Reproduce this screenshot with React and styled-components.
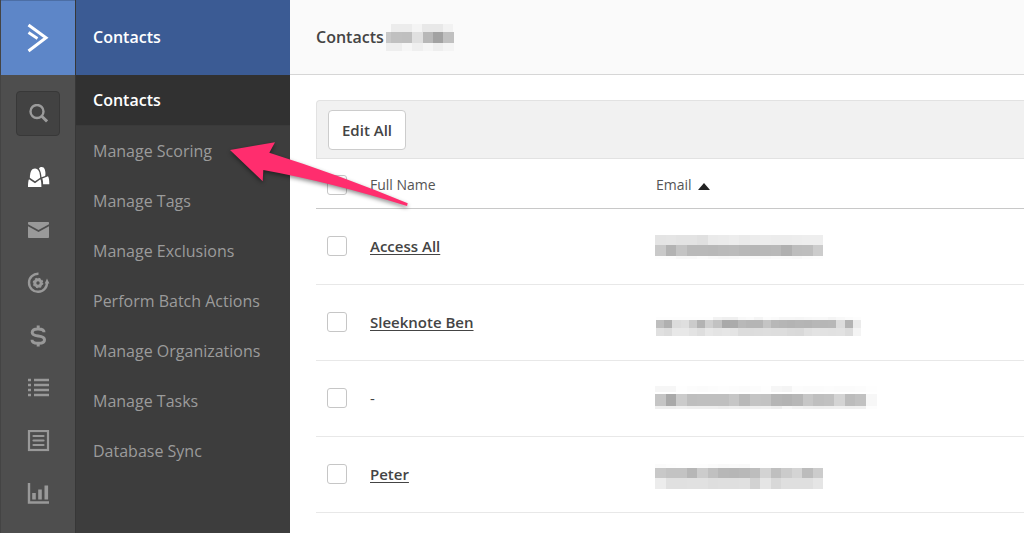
import React from "react";
import styled, { createGlobalStyle } from "styled-components";

const GlobalStyle = createGlobalStyle`
  * { box-sizing: border-box; }
  body {
    margin: 0;
    background: #fff;
    color: #444;
    font-family: "Open Sans", "Liberation Sans", sans-serif;
    font-size: 14px;
  }
`;

const Page = styled.div`
  position: relative;
  display: grid;
  grid-template-columns: 75px 215px minmax(0, 1fr);
  min-height: 100vh;
  overflow: hidden;
`;

const Rail = styled.nav`
  display: flex;
  flex-direction: column;
  align-items: center;
  background: #4e4e4e;
  border-left: 1px solid #444;
`;

const Logo = styled.a`
  display: flex;
  align-items: center;
  justify-content: center;
  align-self: stretch;
  height: 75px;
  background: #5d86c8;
  border-top: 1px solid #4c6ea5;
`;

const SearchButton = styled.button`
  display: flex;
  align-items: center;
  justify-content: center;
  width: 44px;
  height: 45px;
  margin: 16px 0 29px;
  padding: 0;
  background: #424242;
  border: 1px solid #383838;
  border-radius: 4px;
  color: #9b9b9b;
`;

const RailLinks = styled.div`
  display: flex;
  flex-direction: column;
  gap: 29px;
`;

const RailLink = styled.a`
  display: block;
  height: 24px;
  color: ${(p) => (p.$active ? "#fff" : "#999")};

  svg { display: block; }
`;

const Menu = styled.nav`
  background: #3d3d3d;
  border-left: 1px solid #373737;
`;

const MenuTitle = styled.h2`
  height: 75px;
  margin: 0;
  padding: 0 17px;
  background: #3b5b94;
  color: #fff;
  font-size: 16px;
  font-weight: 600;
  line-height: 74px;
`;

const MenuItem = styled.a`
  display: block;
  padding: 0 17px;
  color: ${(p) => (p.$active ? "#fff" : "#9b9b9b")};
  background: ${(p) => (p.$active ? "#313131" : "transparent")};
  border-bottom: ${(p) => (p.$active ? "1px solid #3a3a3a" : "0")};
  font-size: 16px;
  font-weight: ${(p) => (p.$active ? 600 : 500)};
  line-height: 50px;
  text-decoration: none;
  white-space: nowrap;
`;

const Header = styled.header`
  display: flex;
  align-items: center;
  gap: 2px;
  height: 75px;
  padding-left: 26px;
  background: #fafafa;
  border-bottom: 1px solid #d6d6d6;
`;

const Title = styled.h1`
  margin: 0;
  font-size: 16px;
  font-weight: 600;
`;

const Content = styled.section`
  padding: 25px 0 20px 26px;
`;

const Toolbar = styled.div`
  display: flex;
  align-items: center;
  height: 59px;
  padding-left: 11px;
  background: #f1f1f1;
  border: 1px solid #e2e2e2;
  border-right: 0;
  border-top-left-radius: 4px;
`;

const EditButton = styled.button`
  height: 40px;
  padding: 0 13px;
  background: #fff;
  border: 1px solid #ccc;
  border-radius: 4px;
  color: #444;
  font-family: inherit;
  font-size: 15px;
  font-weight: 600;
`;

const Table = styled.table`
  width: 100%;
  table-layout: fixed;
  border-collapse: separate;
  border-spacing: 0;
`;

const Heading = styled.th`
  width: ${(p) => p.$width || "auto"};
  height: 50px;
  padding: 2px 0 0 ${(p) => p.$indent || "1px"};
  border-bottom: 1px solid #c8c8c8;
  font-size: 14px;
  font-weight: 500;
  line-height: 20px;
  text-align: left;
  color: #555;
`;

const Cell = styled.td`
  height: 76px;
  padding: 0 0 2px ${(p) => p.$indent || "1px"};
  border-bottom: 1px solid #e8e8e8;
  font-size: 15px;
  line-height: 20px;
`;

const Checkbox = styled.input`
  appearance: none;
  display: block;
  width: 20px;
  height: 20px;
  margin: 0;
  background: #fff;
  border: 1px solid #c6c6c6;
  border-radius: 3px;
`;

const NameLink = styled.a`
  color: #444;
  font-weight: 600;
  text-decoration: underline;
  text-underline-offset: 2px;
`;

const SortArrow = styled.svg`
  margin-left: 6px;
`;

const MosaicSvg = styled.svg`
  display: block;
`;

const Arrow = styled.svg`
  position: absolute;
  left: 220px;
  top: 130px;
  pointer-events: none;
  filter: drop-shadow(0 2px 2px rgba(0, 0, 0, 0.45));
`;

// Each band is [top, height, cell width, start x, grey levels as two hex digits].
function Mosaic({ bands, width, height }) {
  return (
    <MosaicSvg width={width} height={height} shapeRendering="crispEdges" aria-hidden="true">
      {bands.map(([top, h, cell, start, levels], b) =>
        levels.split(" ").map((level, i) => (
          <rect
            key={`${b}-${i}`}
            x={Math.round(start + i * cell)}
            y={top}
            width={Math.round(start + (i + 1) * cell) - Math.round(start + i * cell)}
            height={h}
            fill={`#${level}${level}${level}`}
          />
        ))
      )}
    </MosaicSvg>
  );
}

const TITLE_BANDS = [
  [0, 8, 10.4, 5, "ec ec f4 e8 e8 f2"],
  [8, 11, 10.4, -5, "c8 c0 bf e0 b8 a2 c0"],
  [19, 8, 10.4, -5, "ee ee f6 ef f5 ee f4"],
];

const rows = [
  {
    name: "Access All",
    bands: [
      [4, 10, 10.5, 0, "e4 e5 e3 e3 e0 ea eb ed ea ec ed ec ec ed ee ee"],
      [14, 11, 10.5, 0, "c9 b3 c4 b9 b9 b8 ba bb b8 b6 b8 b9 b0 bd be cc"],
      [25, 3, 10.5, 0, "fd fd f8 f9 fc f9 f7 f8 fa f9 f9 fb fb f9 fc fd"],
    ],
  },
  {
    name: "Sleeknote Ben",
    bands: [
      [10, 3, 8.2, 1, "fd fd fd fd fd fd fd f2 ef ef f8 fa f4 fc fa f6 f6 f5 f7 f8 f8 f4 f8 fb fd"],
      [13, 8, 8.2, 1, "be b0 dc df cb b3 cf c2 a9 ab b8 b5 b5 c4 b7 b5 b3 b5 b4 b7 b6 b7 dc b3 eb"],
      [21, 8, 8.2, 1, "e0 dc e8 e8 e3 de e7 e4 e6 e4 dc dc dd de dd dd da d9 e0 e3 e2 e1 e2 dc f4"],
    ],
  },
  {
    name: null,
    bands: [
      [3, 6, 10.55, 0, "f6 f6 fe fc fb fc fd fc fb fc fe f6 f4 fc fb fb fc fb fb fc fe"],
      [11, 12, 10.55, 0, "c5 a9 cb be bf bf bf c6 b9 c4 c3 b5 b3 b7 c7 bf c1 d4 bc c1 f7"],
      [23, 3, 10.55, 0, "ee ee f0 ee ee ee ec ee ed ef f0 ed f6 f2 ef ee ef f0 ef f0 fd"],
    ],
  },
  {
    name: "Peter",
    bands: [
      [5, 4, 10.5, 0, "fb fd fe fe fd fb f9 fa f9 fe fe fe fe fe fe fe"],
      [9, 10, 10.5, 0, "c8 c3 c3 b6 cc c0 b7 b6 b8 bd d3 bf cb d4 bc cc"],
      [19, 11, 10.5, 0, "ec e0 e0 e1 e1 de df df e0 d2 e5 d8 df df df e5"],
    ],
  },
];

const menuItems = [
  "Contacts",
  "Manage Scoring",
  "Manage Tags",
  "Manage Exclusions",
  "Perform Batch Actions",
  "Manage Organizations",
  "Manage Tasks",
  "Database Sync",
];

const railIcons = [
  {
    label: "Contacts",
    art: (
      <g fill="currentColor">
        <path d="M13 3.500C14.500 1.300 18 1.500 18.800 4.500c.7 2.300.9 4.500.4 6.500l-3.700 1.300C15.200 8.500 14.600 6 13 3.500z" />
        <path d="M16.300 13.500l5.700-2.200c1.100 1.700 1.300 4.200 1.300 8h-6.200c0-2-.1-4-.8-5.800z" />
        <path d="M3.800 12.800C4.200 6.500 5.500 3.500 9 3.500s4.800 3.500 5.200 9.300L9 16.300z" />
        <path d="M3 14.300l6 4 5.400-4c.8 1.500 1 4.300 1 7.700H2c0-3.400.2-6.200 1-7.700z" />
      </g>
    ),
  },
  {
    label: "Campaigns",
    art: (
      <g fill="currentColor">
        <path d="M3 4h19c.6 0 1 .4 1 1v1.300L12.500 12 2 6.300V5c0-.6.4-1 1-1z" />
        <path d="M2 8.300l10.500 5.700L23 8.300V19c0 .6-.4 1-1 1H3c-.6 0-1-.4-1-1z" />
      </g>
    ),
  },
  {
    label: "Automations",
    art: (
      <g fill="none" stroke="currentColor">
        <path d="M12.500 2.800A9 9 0 1 0 21 11" strokeWidth="2.400" />
        <path d="M18.800 12.500L21 7.500l2.400 5z" fill="currentColor" stroke="none" />
        <circle cx="12" cy="12" r="3.200" strokeWidth="3" />
        <circle cx="12" cy="12" r="4.700" strokeWidth="1.200" strokeDasharray="1.900 1.790" />
      </g>
    ),
  },
  {
    label: "Deals",
    art: (
      <path
        d="M18 8.300C18 6 16 5 12.500 5h-1C8.200 5 6.200 6.100 6.200 8.500s2 3 6 3.500 6.300 1.400 6.300 3.700-2 3.600-5.500 3.600h-1.200c-3.600 0-5.800-1-5.800-3.500M12.200 1.500V5M12.200 19v3.500"
        fill="none"
        stroke="currentColor"
        strokeWidth="3"
      />
    ),
  },
  {
    label: "Lists",
    art: (
      <path
        d="M2 3h3M8 3h15M2 8h3M8 8h15M2 13h3M8 13h15M2 18h3M8 18h15"
        fill="none"
        stroke="currentColor"
        strokeWidth="2.400"
      />
    ),
  },
  {
    label: "Forms",
    art: (
      <g fill="none" stroke="currentColor">
        <rect x="3" y="1" width="19" height="19" strokeWidth="2.200" />
        <path d="M7.500 6h10M7.500 10.500h10M7.500 15h10" strokeWidth="2.200" strokeLinecap="round" />
      </g>
    ),
  },
  {
    label: "Reports",
    art: (
      <g fill="none" stroke="currentColor">
        <path d="M3 0V19.500H23" strokeWidth="2.400" />
        <path d="M8 10v6.500M14 6.500v10M20.300 2.500v14" strokeWidth="3.600" />
      </g>
    ),
  },
];

export default function App() {
  return (
    <Page>
      <GlobalStyle />
      <Rail>
        <Logo href="#" aria-label="Home">
          <svg width="22" height="30" viewBox="0 0 22 30" fill="none" stroke="#fff">
            <path d="M1.500 2L19 14.800 1.500 28" strokeWidth="3" />
            <path d="M1.500 9.500l9 6" strokeWidth="2.800" />
          </svg>
        </Logo>
        <SearchButton aria-label="Search">
          <svg width="20" height="20" viewBox="0 0 20 20" fill="none" stroke="currentColor">
            <circle cx="9" cy="7.500" r="6.500" strokeWidth="2.400" />
            <path d="M13.500 12l5.500 5.400" strokeWidth="2.900" />
          </svg>
        </SearchButton>
        <RailLinks>
          {railIcons.map(({ label, art }, i) => (
            <RailLink key={label} href="#" aria-label={label} $active={i === 0}>
              <svg width="24" height="24" viewBox="0 0 24 24">{art}</svg>
            </RailLink>
          ))}
        </RailLinks>
      </Rail>
      <Menu>
        <MenuTitle>Contacts</MenuTitle>
        {menuItems.map((item, i) => (
          <MenuItem key={item} href="#" $active={i === 0}>{item}</MenuItem>
        ))}
      </Menu>
      <main>
        <Header>
          <Title>Contacts</Title>
          <Mosaic bands={TITLE_BANDS} width={68} height={27} />
        </Header>
        <Content>
          <Toolbar>
            <EditButton>Edit All</EditButton>
          </Toolbar>
          <Table>
            <thead>
              <tr>
                <Heading $width="53px" $indent="11px">
                  <Checkbox type="checkbox" aria-label="Select all contacts" />
                </Heading>
                <Heading $width="286px">Full Name</Heading>
                <Heading>
                  Email
                  <SortArrow width="12" height="7" viewBox="0 0 12 7" aria-hidden="true">
                    <path d="M0 7L6 0l6 7z" fill="#222" />
                  </SortArrow>
                </Heading>
              </tr>
            </thead>
            <tbody>
              {rows.map(({ name, bands }) => (
                <tr key={name || "unnamed"}>
                  <Cell $indent="11px">
                    <Checkbox type="checkbox" aria-label={`Select ${name || "unnamed contact"}`} />
                  </Cell>
                  <Cell>{name ? <NameLink href="#">{name}</NameLink> : "-"}</Cell>
                  <Cell $indent="0">
                    <Mosaic bands={bands} width={224} height={30} />
                  </Cell>
                </tr>
              ))}
            </tbody>
          </Table>
        </Content>
      </main>
      <Arrow width="200" height="90" viewBox="220 130 200 90" aria-hidden="true">
        <path
          d="M230 150L275 142.300 269.300 152.700Q340 175 407.700 203.300L407 206Q330 182 263.300 170L262.700 181.300z"
          fill="#ff2d6e"
        />
      </Arrow>
    </Page>
  );
}
